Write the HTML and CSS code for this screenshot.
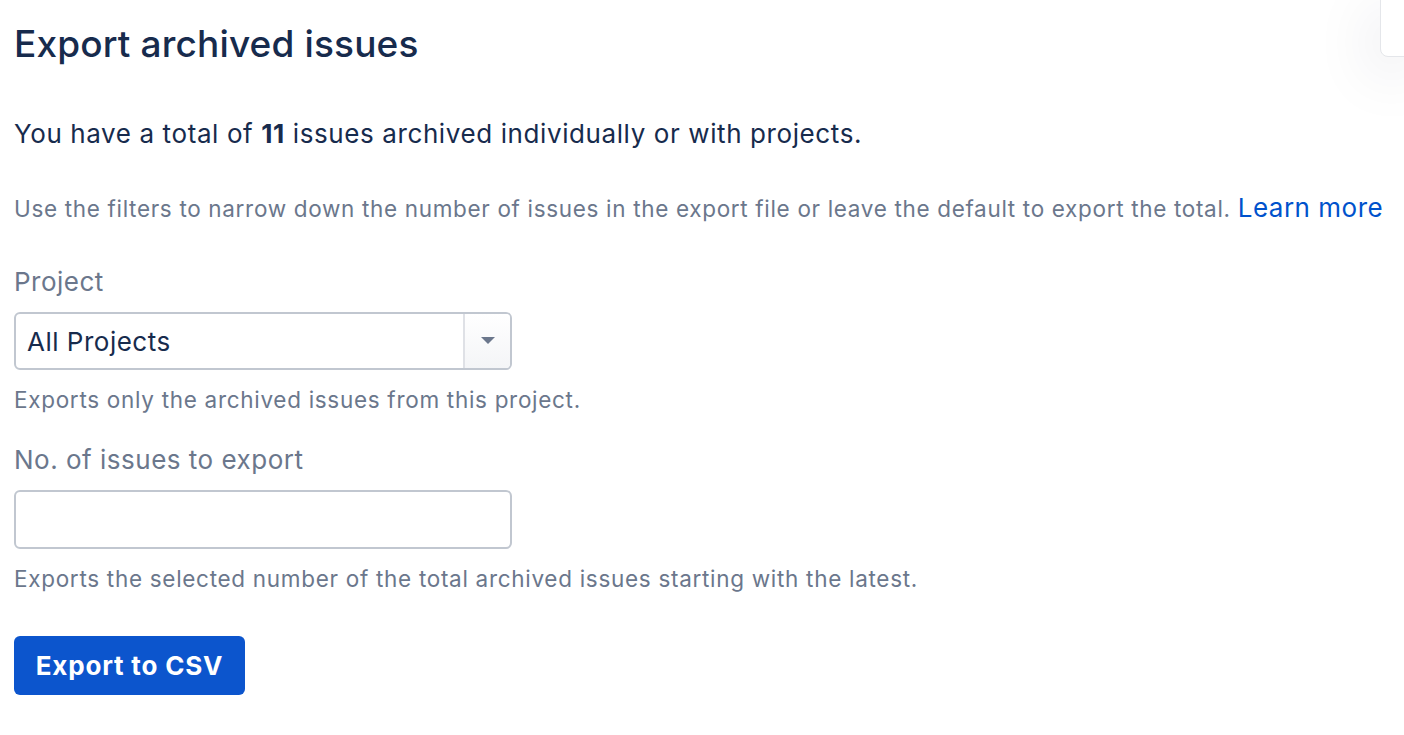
FILE: index.html
```html
<!DOCTYPE html>
<html lang="en">
<head>
    <meta charset="UTF-8">
    <meta name="viewport" content="width=device-width, initial-scale=1.0">
    <title>Export archived issues</title>
    <link rel="stylesheet" href="styles.css">
</head>
<body>
    <div class="corner-card"></div>

    <div class="page">
        <h1>Export archived issues</h1>
        <p class="summary">You have a total of <strong>11</strong> issues archived individually or with projects.</p>
        <p class="hint">Use the filters to narrow down the number of issues in the export file or leave the default to export the total. <a href="#">Learn more</a></p>

        <form class="export-form">
            <div class="field">
                <label for="project">Project</label>
                <div class="select">
                    <span class="select-value">All Projects</span>
                    <span class="select-toggle"><span class="caret"></span></span>
                </div>
                <div class="field-help">Exports only the archived issues from this project.</div>
            </div>

            <div class="field">
                <label for="count">No. of issues to export</label>
                <input type="text" id="count" name="count">
                <div class="field-help">Exports the selected number of the total archived issues starting with the latest.</div>
            </div>

            <button type="button" class="btn-primary">Export to CSV</button>
        </form>
    </div>
</body>
</html>
```

FILE: styles.css
```css
body {
    margin: 0;
    font-family: Inter, "Noto Sans", sans-serif;
    color: #172b4d;
    background: #fff;
    overflow: hidden;
}
.page {
    padding: 20px 14px 0 14px;
}
h1 {
    font-size: 37px;
    font-weight: 500;
    margin: 0;
    line-height: 48px;
    letter-spacing: 0.15px;
}
.summary {
    font-size: 26px;
    letter-spacing: 0.6px;
    margin: 50px 0 0 0;
    line-height: 32px;
}
.summary strong {
    font-weight: 700;
}
.hint {
    font-size: 22.5px;
    letter-spacing: 0.67px;
    color: #6b778c;
    margin: 42px 0 0 0;
    line-height: 32px;
}
.hint a {
    color: #0052cc;
    text-decoration: none;
    font-size: 26px;
    letter-spacing: 0.5px;
}
.export-form {
    margin-top: 41px;
}
.field label {
    display: block;
    font-size: 26px;
    letter-spacing: 0.5px;
    color: #6b778c;
    line-height: 32px;
    margin-bottom: 14px;
}
.select {
    width: 498px;
    height: 58px;
    box-sizing: border-box;
    border: 2px solid #c1c7d0;
    border-radius: 6px;
    display: flex;
    align-items: stretch;
    overflow: hidden;
}
.select-value {
    flex: 1;
    display: flex;
    align-items: center;
    padding-left: 11px;
    font-size: 26px;
    letter-spacing: 0.5px;
}
.select-toggle {
    width: 45px;
    border-left: 2px solid #dfe1e6;
    background: linear-gradient(#ffffff, #f4f5f7);
    display: flex;
    align-items: center;
    justify-content: center;
}
.caret {
    width: 0;
    height: 0;
    border-left: 7px solid transparent;
    border-right: 7px solid transparent;
    border-top: 7px solid #6b778c;
    margin-top: -2px;
}
.field input {
    display: block;
    width: 498px;
    height: 59px;
    box-sizing: border-box;
    border: 2px solid #c1c7d0;
    border-radius: 6px;
    margin: 0;
    padding: 0 11px;
    font: inherit;
    font-size: 26px;
}
.field-help {
    font-size: 22.5px;
    letter-spacing: 0.7px;
    color: #6b778c;
    line-height: 28px;
    margin: 16px 0 30px 0;
}
.btn-primary {
    margin-top: 13px;
    width: 231px;
    height: 59px;
    background: #0c55cd;
    color: #fff;
    border: none;
    border-radius: 6px;
    font: inherit;
    font-size: 26px;
    letter-spacing: 0.8px;
    font-weight: 700;
    cursor: pointer;
}
.corner-card {
    position: absolute;
    top: -12px;
    right: -20px;
    width: 42px;
    height: 67px;
    background: #fff;
    border: 1px solid #e4e6ea;
    border-radius: 8px;
    box-shadow: -10px 20px 60px rgba(9, 30, 66, 0.08);
}
```
